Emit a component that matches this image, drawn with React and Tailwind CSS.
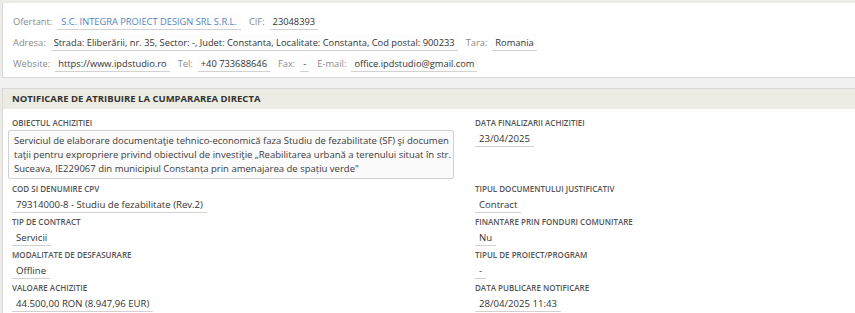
import React from 'react';

const font = "font-['Open_Sans','DejaVu_Sans',sans-serif]";

function Val({ children, className = '' }) {
  return (
    <span className={`h-[17px] leading-[17px] px-[3px] border-b border-[#d2d2d2] bg-[#fdfdfd] text-[#333] whitespace-nowrap ${className}`}>
      {children}
    </span>
  );
}

function Lbl({ children }) {
  return <span className="text-[#8a8a8a] whitespace-nowrap">{children}</span>;
}

function Field({ label, value }) {
  return (
    <div>
      <div className="h-[15px] leading-[15px] pl-[4px] text-[8px] font-semibold text-[#555] whitespace-nowrap">{label}</div>
      <div className="h-[18px] pl-[4px] flex">
        <span className="h-[17px] leading-[17px] px-[4px] border-b border-[#d2d2d2] text-[9.6px] text-[#333] whitespace-nowrap">{value}</span>
      </div>
    </div>
  );
}

export default function App() {
  return (
    <div className={`w-[855px] h-[313px] overflow-hidden bg-[#ecebe5] pt-[3px] ${font}`}>
      {/* ofertant panel */}
      <div className="ml-[2px] bg-white border-l border-b border-[#d8d8d8] h-[75px] pt-[8px] pl-[10px] text-[9.3px]">
        <div className="h-[21px] flex items-center gap-[5px]">
          <Lbl>Ofertant:</Lbl>
          <Val className="text-[#5585bd] px-[4px]">S.C. INTEGRA PROIECT DESIGN SRL S.R.L.</Val>
          <span className="ml-[3px]"><Lbl>CIF:</Lbl></span>
          <Val>23048393</Val>
        </div>
        <div className="h-[21px] flex items-center gap-[5px]">
          <Lbl>Adresa:</Lbl>
          <Val>Strada: Eliberării, nr. 35, Sector: -, Judet: Constanta, Localitate: Constanta, Cod postal: 900233</Val>
          <span className="ml-[3px]"><Lbl>Tara:</Lbl></span>
          <Val>Romania</Val>
        </div>
        <div className="h-[21px] flex items-center gap-[5px]">
          <Lbl>Website:</Lbl>
          <Val>https://www.ipdstudio.ro</Val>
          <span className="ml-[3px]"><Lbl>Tel:</Lbl></span>
          <Val>+40 733688646</Val>
          <span className="ml-[3px]"><Lbl>Fax:</Lbl></span>
          <Val>-</Val>
          <span className="ml-[3px]"><Lbl>E-mail:</Lbl></span>
          <Val>office.ipdstudio@gmail.com</Val>
        </div>
      </div>

      {/* gap */}
      <div className="h-[10px] bg-[#f1f1f1]" />

      {/* notificare panel */}
      <div className="ml-[2px] bg-white border-l border-t border-[#d8d8d8] h-[300px]">
        <div className="h-[20px] bg-[#ecebe4] pl-[9px] leading-[20px] text-[9.5px] font-bold text-[#333] whitespace-nowrap">
          NOTIFICARE DE ATRIBUIRE LA CUMPARAREA DIRECTA
        </div>
        <div className="grid grid-cols-[468px_1fr] pt-[6px] pl-[5px]">
          <div>
            <div className="h-[15px] leading-[15px] pl-[4px] text-[8px] font-semibold text-[#555] whitespace-nowrap">OBIECTUL ACHIZITIEI</div>
            <div className="w-[446px] h-[49px] mb-[2px] border border-[#d2d2d2] rounded-[2px] bg-[#fbfbfb] px-[5px] pt-[3px] text-[9.5px] leading-[14px] text-[#3a3a3a] whitespace-nowrap overflow-hidden">
              <div>Serviciul de elaborare documentaţie tehnico-economică faza Studiu de fezabilitate (SF) şi documen</div>
              <div>taţii pentru expropriere privind obiectivul de investiţie „Reabilitarea urbană a terenului situat în str.</div>
              <div>Suceava, IE229067 din municipiul Constanța prin amenajarea de spațiu verde"</div>
            </div>
          </div>
          <div className="-ml-[5px]">
            <Field label="DATA FINALIZARII ACHIZITIEI" value="23/04/2025" />
          </div>

          <Field label="COD SI DENUMIRE CPV" value="79314000-8 - Studiu de fezabilitate (Rev.2)" />
          <div className="-ml-[5px]"><Field label="TIPUL DOCUMENTULUI JUSTIFICATIV" value="Contract" /></div>

          <Field label="TIP DE CONTRACT" value="Servicii" />
          <div className="-ml-[5px]"><Field label="FINANTARE PRIN FONDURI COMUNITARE" value="Nu" /></div>

          <Field label="MODALITATE DE DESFASURARE" value="Offline" />
          <div className="-ml-[5px]"><Field label="TIPUL DE PROIECT/PROGRAM" value="-" /></div>

          <Field label="VALOARE ACHIZITIE" value="44.500,00 RON (8.947,96 EUR)" />
          <div className="-ml-[5px]"><Field label="DATA PUBLICARE NOTIFICARE" value="28/04/2025 11:43" /></div>
        </div>
      </div>
    </div>
  );
}
